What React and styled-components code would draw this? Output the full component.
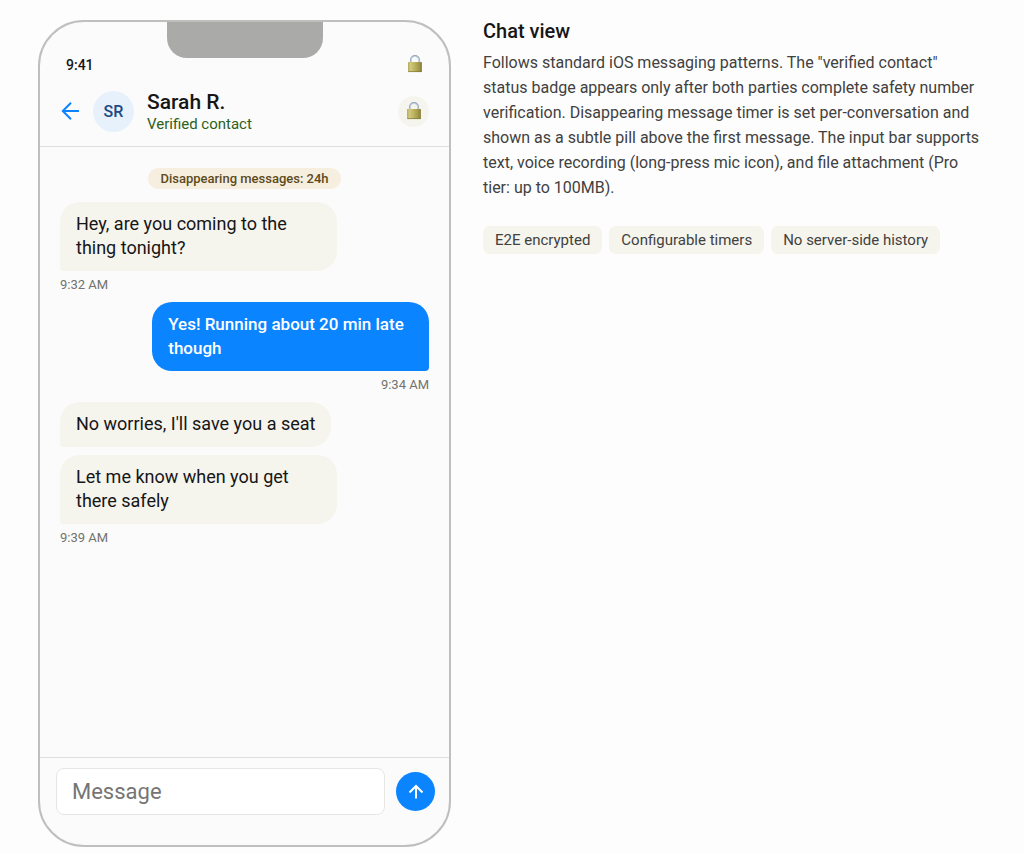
import styled, { createGlobalStyle } from 'styled-components';

const colors = {
  page: '#fdfdfd',
  screen: '#fbfbfb',
  frame: '#bfbfbe',
  notch: '#aaaaa8',
  line: '#e0e0df',
  ink: '#161616',
  body: '#41413f',
  muted: '#73726c',
  blue: '#0a84ff',
  sand: '#f5f4ed',
};

const messages = [
  { id: 1, text: 'Hey, are you coming to the thing tonight?', time: '9:32 AM' },
  { id: 2, text: 'Yes! Running about 20 min late though', time: '9:34 AM', own: true },
  { id: 3, text: "No worries, I'll save you a seat" },
  { id: 4, text: 'Let me know when you get there safely', time: '9:39 AM' },
];

const tags = ['E2E encrypted', 'Configurable timers', 'No server-side history'];

function Lock() {
  return (
    <svg width="14" height="18" viewBox="0 0 14 18" aria-hidden="true">
      <defs>
        <linearGradient id="brass" x1="0" x2="1" y1="0" y2="0">
          <stop offset="0" stopColor="#aaa04f" />
          <stop offset="0.15" stopColor="#d3cb7c" />
          <stop offset="0.45" stopColor="#bdb464" />
          <stop offset="0.8" stopColor="#a19747" />
          <stop offset="1" stopColor="#857b38" />
        </linearGradient>
      </defs>
      <path d="M2.7 8V5.2a4.3 4.3 0 0 1 8.6 0V8" fill="none" stroke="#94a3b8" strokeWidth="1.6" />
      <path d="M3 8V5.3a4 4 0 0 1 8 0V8" fill="none" stroke="#cbd9e9" strokeWidth="0.8" />
      <rect x="0.1" y="7.1" width="13.8" height="9.9" rx="0.6" fill="url(#brass)" />
      <path d="M0.5 16.6h13" stroke="#7f7638" strokeWidth="0.7" />
    </svg>
  );
}

function App() {
  return (
    <Page>
      <GlobalStyle />
      <Phone>
        <Notch />
        <StatusBar>
          <span>9:41</span>
          <Lock />
        </StatusBar>
        <Header>
          <BackButton type="button" aria-label="Back">
            <svg width="18" height="18" viewBox="0 0 18 18" aria-hidden="true">
              <path d="M18 9H1.8M10 0.8L1.8 9l8.2 8.2" fill="none" stroke="currentColor" strokeWidth="2" />
            </svg>
          </BackButton>
          <Avatar>SR</Avatar>
          <Contact>
            <Name>Sarah R.</Name>
            <Verified>Verified contact</Verified>
          </Contact>
          <LockButton type="button" aria-label="Encryption details">
            <Lock />
          </LockButton>
        </Header>
        <Thread>
          <Timer>Disappearing messages: 24h</Timer>
          {messages.map((message) => (
            <Message key={message.id} $own={message.own}>
              <Bubble $own={message.own}>{message.text}</Bubble>
              {message.time && <Time>{message.time}</Time>}
            </Message>
          ))}
        </Thread>
        <InputBar>
          <Field type="text" placeholder="Message" aria-label="Message" />
          <SendButton type="button" aria-label="Send">
            <svg width="16" height="16" viewBox="0 0 16 16" aria-hidden="true">
              <path d="M8 14.5V2M1.5 8.5L8 2l6.5 6.5" fill="none" stroke="currentColor" strokeWidth="2" />
            </svg>
          </SendButton>
        </InputBar>
      </Phone>
      <Notes>
        <Title>Chat view</Title>
        <Description>
          Follows standard iOS messaging patterns. The "verified contact" status
          badge appears only after both parties complete safety number
          verification. Disappearing message timer is set per-conversation and
          shown as a subtle pill above the first message. The input bar supports
          text, voice recording (long-press mic icon), and file attachment (Pro
          tier: up to 100MB).
        </Description>
        <Tags>
          {tags.map((tag) => (
            <Tag key={tag}>{tag}</Tag>
          ))}
        </Tags>
      </Notes>
    </Page>
  );
}

const GlobalStyle = createGlobalStyle`
  * {
    box-sizing: border-box;
  }

  body {
    margin: 0;
    background-color: ${colors.page};
    color: ${colors.ink};
    font-family: Roboto, "Liberation Sans", sans-serif;
  }

  button,
  input {
    font-family: inherit;
  }

  svg {
    display: block;
  }
`;

const Page = styled.main`
  display: grid;
  grid-template-columns: minmax(0, 413fr) minmax(0, 503fr);
  gap: 32px;
  min-height: 100vh;
  padding: 20px 38px 6px;
`;

const Phone = styled.section`
  position: relative;
  display: flex;
  flex-direction: column;
  border: 2px solid ${colors.frame};
  border-radius: 46px;
  background-color: ${colors.screen};
  overflow: hidden;
`;

const Notch = styled.div`
  position: absolute;
  top: 0;
  left: 50%;
  width: 156px;
  height: 36px;
  border-radius: 0 0 20px 20px;
  background-color: ${colors.notch};
  transform: translateX(-50%);
`;

const StatusBar = styled.div`
  display: flex;
  align-items: flex-start;
  justify-content: space-between;
  padding: 33px 27px 0 26px;
  font-size: 14px;
  font-weight: 500;
  line-height: 20px;
`;

const Header = styled.header`
  display: flex;
  align-items: center;
  padding: 14px 20px 13px 21px;
  border-bottom: 1px solid ${colors.line};
`;

const BackButton = styled.button`
  padding: 0;
  border: 0;
  background: none;
  color: ${colors.blue};
`;

const Avatar = styled.div`
  display: flex;
  align-items: center;
  justify-content: center;
  width: 41px;
  height: 41px;
  margin: 0 13px 0 14px;
  border-radius: 50%;
  background-color: #e6f1fc;
  color: #1d4a83;
  font-size: 16px;
  font-weight: 500;
`;

const Contact = styled.div`
  flex: 1;
`;

const Name = styled.div`
  font-size: 21px;
  font-weight: 500;
  line-height: 26px;
`;

const Verified = styled.div`
  color: #2b6119;
  font-size: 15px;
  line-height: 18px;
`;

const LockButton = styled.button`
  display: flex;
  align-items: center;
  justify-content: center;
  width: 31px;
  height: 31px;
  padding: 0;
  border: 0;
  border-radius: 50%;
  background-color: ${colors.sand};
`;

const Thread = styled.div`
  display: flex;
  flex: 1;
  flex-direction: column;
  gap: 8px;
  padding: 21px 20px 20px;
`;

const Timer = styled.div`
  align-self: center;
  margin-bottom: 5px;
  padding: 0 12px;
  border-radius: 11px;
  background-color: #f6eedf;
  color: #5c4a1c;
  font-size: 13px;
  font-weight: 500;
  line-height: 21px;
`;

const Message = styled.div`
  display: flex;
  flex-direction: column;
  align-items: ${({ $own }) => ($own ? 'flex-end' : 'flex-start')};
`;

const Bubble = styled.div`
  max-width: 75%;
  padding: 10px 16px 11px;
  border-radius: ${({ $own }) => ($own ? '20px 20px 4px 20px' : '20px 20px 20px 4px')};
  background-color: ${({ $own }) => ($own ? colors.blue : colors.sand)};
  color: ${({ $own }) => ($own ? '#ffffff' : colors.ink)};
  font-size: ${({ $own }) => ($own ? '17px' : '18px')};
  font-weight: ${({ $own }) => ($own ? 500 : 400)};
  line-height: 24px;
`;

const Time = styled.div`
  margin-top: 4px;
  color: ${colors.muted};
  font-size: 13px;
  line-height: 19px;
`;

const InputBar = styled.div`
  display: flex;
  align-items: center;
  gap: 11px;
  padding: 10px 14px 30px 16px;
  border-top: 1px solid ${colors.line};
`;

const Field = styled.input`
  flex: 1;
  min-width: 0;
  height: 47px;
  padding: 0 15px;
  border: 1px solid #e6e6e5;
  border-radius: 8px;
  background-color: #ffffff;
  color: ${colors.ink};
  font-size: 22px;

  &::placeholder {
    color: #757575;
    opacity: 1;
  }
`;

const SendButton = styled.button`
  display: flex;
  align-items: center;
  justify-content: center;
  width: 39px;
  height: 39px;
  padding: 0;
  border: 0;
  border-radius: 50%;
  background-color: ${colors.blue};
  color: #ffffff;
`;

const Notes = styled.section``;

const Title = styled.h2`
  margin: 0 0 8px;
  font-size: 20px;
  font-weight: 500;
  line-height: 22px;
`;

const Description = styled.p`
  margin: 0;
  padding-right: 6px;
  color: ${colors.body};
  font-size: 16px;
  line-height: 25px;
`;

const Tags = styled.div`
  display: flex;
  flex-wrap: wrap;
  gap: 7px;
  margin-top: 26px;
`;

const Tag = styled.span`
  padding: 4px 12px;
  border-radius: 7px;
  background-color: ${colors.sand};
  color: ${colors.body};
  font-size: 15px;
  line-height: 20px;
`;

export default App;
